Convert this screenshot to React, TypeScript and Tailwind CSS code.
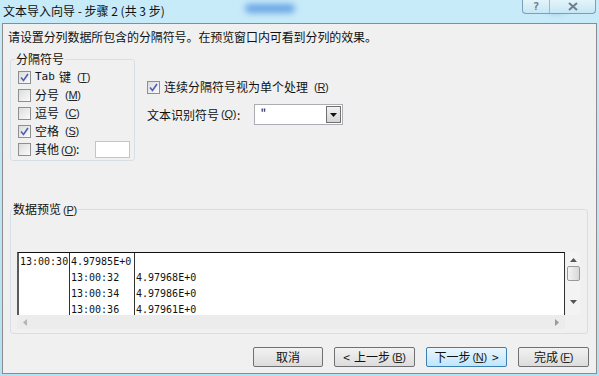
import React from 'react';

const cjk = { fontFamily: '"Noto Sans CJK SC", "Noto Sans", sans-serif' };
const mono = { fontFamily: '"DejaVu Sans Mono", "Liberation Mono", monospace' };
const latin = { fontFamily: '"Liberation Sans", Arial, sans-serif' };

// small "(X)" access-key marker with underlined letter
const Key: React.FC<{ k: string }> = ({ k }) => (
    <span className="ml-[2px] text-[11px] tracking-[-0.3px] text-[#222]" style={latin}>
        (<span className="underline">{k}</span>)
    </span>
);

const Check: React.FC<{ on?: boolean }> = ({ on }) => (
    <span className="flex h-[13px] w-[13px] shrink-0 items-center justify-center border border-[#8e8f8f] bg-gradient-to-br from-[#dcdcdc] to-[#fbfbfb]">
        {on && (
            <svg width="9" height="9" viewBox="0 0 9 9">
                <path d="M1 4.5 L3.5 7.5 L8 1" fill="none" stroke="#4b61b3" strokeWidth="1.6" />
            </svg>
        )}
    </span>
);

const Btn: React.FC<{ w: string; focus?: boolean; children: React.ReactNode }> = ({ w, focus, children }) => (
    <div
        className={`flex h-[20px] ${w} items-center justify-center rounded-[2px] border text-[12px] text-[#111] ${
            focus
                ? 'border-[#3c7fb1] bg-gradient-to-b from-[#eaf6fd] to-[#bee6fd]'
                : 'border-[#707070] bg-gradient-to-b from-[#f2f2f2] to-[#dcdcdc]'
        }`}
        style={cjk}
    >
        {children}
    </div>
);

const rows = [
    ['13:00:30', '4.97985E+0', ''],
    ['', '13:00:32', '4.97968E+0'],
    ['', '13:00:34', '4.97986E+0'],
    ['', '13:00:36', '4.97961E+0'],
];

export default function App() {
    return (
        <div className="relative h-[376px] w-[599px] overflow-hidden bg-gradient-to-b from-[#c8ebf9] to-[#b4e1f4]" style={cjk}>
            {/* blurred background blobs seen through the glass frame */}
            <div className="absolute left-[245px] top-[4px] h-[9px] w-[50px] rounded-full bg-[#6aa6e6] blur-[3px]" />
            <div className="absolute left-[548px] top-[3px] h-[9px] w-[18px] rounded-full bg-[#7ab1ea] blur-[3px]" />

            {/* Title bar */}
            <div className="relative flex h-[23px] items-start">
                <span className="ml-[3px] mt-[3px] text-[12px] leading-[16px] text-[#111]">
                    文本导入向导 - 步骤 2 (共 3 步)
                </span>
                <div className="ml-auto mr-[3px] flex h-[14px] overflow-hidden rounded-b-[4px] border border-t-0 border-[#7f9db9] bg-gradient-to-b from-[#e4f4fb] to-[#c6e6f4]">
                    <div className="flex w-[27px] items-center justify-center border-r border-[#9fb7ca] text-[11px] font-bold leading-none text-[#6d7f8d]" style={mono}>
                        ?
                    </div>
                    <div className="flex w-[45px] items-center justify-center">
                        <svg width="10" height="9" viewBox="0 0 10 9">
                            <path d="M1 1 L9 8 M9 1 L1 8" stroke="#6d7f8d" strokeWidth="2" />
                        </svg>
                    </div>
                </div>
            </div>

            {/* Dialog body */}
            <div className="mx-[2px] h-[351px] border border-[#8c8c8c] bg-[#f0f0f0] text-[12px] text-[#111]">
                <div className="ml-[5px] mt-[6px] h-[14px] text-[12px] leading-[14px] tracking-[-0.1px]">
                    请设置分列数据所包含的分隔符号。在预览窗口内可看到分列的效果。
                </div>

                <div className="mt-[8px] flex">
                    {/* 分隔符号 */}
                    <fieldset className="ml-[7px] h-[109px] w-[125px] rounded-[3px] border border-[#d5dfe5] pl-[7px]">
                        <legend className="-ml-[3px] px-[1px] text-[12px] leading-[14px]">分隔符号</legend>
                        <div className="mt-[2px] flex flex-col">
                            <label className="flex h-[18px] items-center gap-[4px]">
                                <Check on />
                                <span className="text-[11px]" style={mono}>Tab</span>
                                <span>键</span>
                                <Key k="T" />
                            </label>
                            <label className="flex h-[18px] items-center gap-[4px]">
                                <Check />
                                <span>分号</span>
                                <Key k="M" />
                            </label>
                            <label className="flex h-[18px] items-center gap-[4px]">
                                <Check />
                                <span>逗号</span>
                                <Key k="C" />
                            </label>
                            <label className="flex h-[18px] items-center gap-[4px]">
                                <Check on />
                                <span>空格</span>
                                <Key k="S" />
                            </label>
                            <label className="flex h-[18px] items-center gap-[4px]">
                                <Check />
                                <span>其他</span>
                                <span className="-ml-[4px]">
                                    <Key k="O" />:
                                </span>
                                <span className="ml-[12px] h-[17px] w-[35px] border border-[#c5c5c5] bg-white" />
                            </label>
                        </div>
                    </fieldset>

                    {/* right controls */}
                    <div className="ml-[12px] flex flex-col">
                        <label className="mt-[28px] flex h-[14px] items-center gap-[4px]">
                            <Check on />
                            <span>连续分隔符号视为单个处理</span>
                            <Key k="R" />
                        </label>
                        <div className="mt-[10px] flex items-center">
                            <span>文本识别符号</span>
                            <Key k="Q" />
                            <span className="ml-[1px]">:</span>
                            <div className="ml-[14px] flex h-[21px] w-[89px] border border-[#abadb3] bg-white">
                                <span className="ml-[5px] mt-[1px] flex-1 text-[12px] leading-[14px]">"</span>
                                <div className="m-[1px] flex w-[15px] items-center justify-center border border-[#707070] bg-gradient-to-b from-[#f2f2f2] to-[#d5d5d5]">
                                    <svg width="7" height="4" viewBox="0 0 7 4">
                                        <path d="M0 0 H7 L3.5 4 Z" fill="#111" />
                                    </svg>
                                </div>
                            </div>
                        </div>
                    </div>
                </div>

                {/* 数据预览 */}
                <fieldset className="ml-[7px] mt-[41px] h-[132px] w-[578px] rounded-[3px] border border-[#d5dfe5]">
                    <legend className="ml-[1px] px-[1px] text-[12px] leading-[14px]">
                        数据预览<Key k="P" />
                    </legend>
                    <div className="ml-[6px] mt-[35px] flex">
                        <div className="flex w-[548px] flex-col">
                            <div className="flex h-[63px] overflow-hidden border-l-2 border-t border-l-[#5a5a5a] border-t-[#111] border-r border-r-[#333] bg-white text-[10px] leading-[16px] text-[#111]" style={mono}>
                                {[0, 1, 2].map((c) => (
                                    <div
                                        key={c}
                                        className={`flex flex-col pt-[1px] pl-[1px] ${
                                            c === 0 ? 'w-[51px] border-r border-[#333]' : c === 1 ? 'w-[65px] border-r border-[#333]' : 'flex-1'
                                        }`}
                                    >
                                        {rows.map((r, i) => (
                                            <span key={i} className="h-[16px] shrink-0 whitespace-pre">
                                                {r[c]}
                                            </span>
                                        ))}
                                    </div>
                                ))}
                            </div>
                            {/* horizontal scrollbar */}
                            <div className="flex h-[14px] items-center justify-between bg-[#ececec] px-[6px]">
                                <svg width="4" height="7" viewBox="0 0 4 7">
                                    <path d="M4 0 V7 L0 3.5 Z" fill="#b5b5b5" />
                                </svg>
                                <svg width="4" height="7" viewBox="0 0 4 7">
                                    <path d="M0 0 V7 L4 3.5 Z" fill="#9a9a9a" />
                                </svg>
                            </div>
                        </div>
                        {/* vertical scrollbar */}
                        <div className="ml-[1px] flex h-[63px] w-[14px] flex-col items-center bg-[#f3f3f3]">
                            <svg className="mt-[6px]" width="7" height="4" viewBox="0 0 7 4">
                                <path d="M0 4 H7 L3.5 0 Z" fill="#555" />
                            </svg>
                            <div className="mt-[4px] h-[15px] w-[13px] rounded-[2px] border border-[#9a9a9a] bg-gradient-to-r from-[#f4f4f4] to-[#d8d8d8]" />
                            <svg className="mt-[19px]" width="7" height="4" viewBox="0 0 7 4">
                                <path d="M0 0 H7 L3.5 4 Z" fill="#555" />
                            </svg>
                        </div>
                    </div>
                </fieldset>

                {/* buttons */}
                <div className="mt-[13px] flex justify-end gap-[11px] pr-[7px]">
                    <Btn w="w-[70px]">取消</Btn>
                    <Btn w="w-[81px]">
                        <span className="mr-[4px]">&lt;</span>上一步<Key k="B" />
                    </Btn>
                    <Btn w="w-[81px]" focus>
                        下一步<Key k="N" />
                        <span className="ml-[5px]">&gt;</span>
                    </Btn>
                    <Btn w="w-[71px]">
                        完成<Key k="F" />
                    </Btn>
                </div>
            </div>
        </div>
    );
}
